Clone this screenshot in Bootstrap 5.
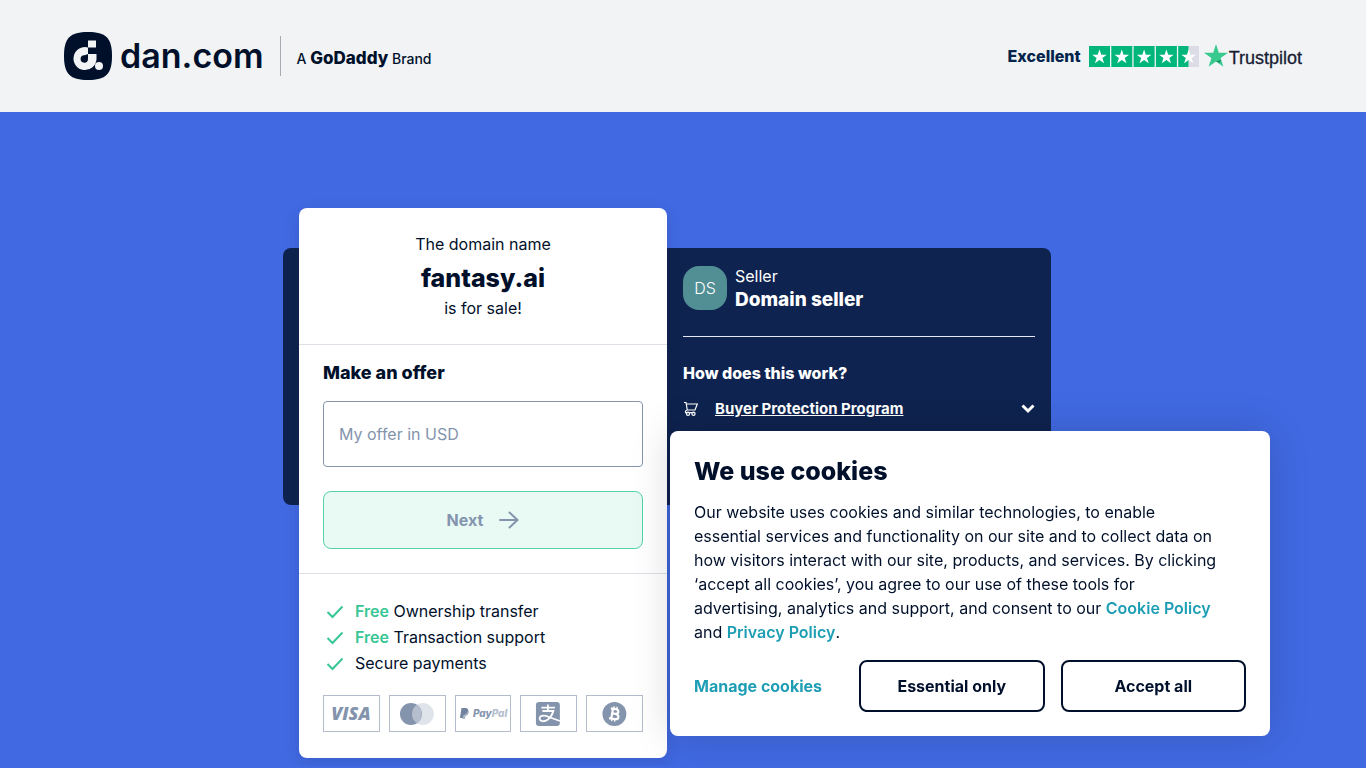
<!DOCTYPE html>
<html lang="en">
<head>
<meta charset="utf-8">
<meta name="viewport" content="width=device-width, initial-scale=1">
<title>fantasy.ai is for sale</title>
<link href="https://cdn.jsdelivr.net/npm/bootstrap@5.3.0/dist/css/bootstrap.min.css" rel="stylesheet">
<style>
  :root { --navy: #00102b; --panel: #0e234f; --mint: #38c695; --teal: #1e9eb4; --slate: #8494ad; }
  body { font-family: Inter, "Noto Sans", sans-serif; font-size: 16px; line-height: 24px; color: var(--navy); background: #4169e1; }
  .site-header { background: #f1f3f5; min-height: 112px; padding: 24px 64px; }
  .brand-name { font-size: 34px; line-height: 40px; font-weight: 600; }
  .brand-rule { width: 1px; height: 40px; background: #a6abb2; }
  .brand-by { font-size: 14px; font-weight: 500; padding-top: 4px; }
  .brand-by strong { font-size: 17px; font-weight: 800; }
  .rating-word { font-size: 16px; font-weight: 800; color: #05244c; }
  .trust-word { font-family: "Liberation Sans", sans-serif; font-size: 18px; color: #191b33; padding-top: 4px; -webkit-text-stroke: 0.3px #191b33; }
  .hero { padding: 96px 0 8px; }
  .hero-grid { display: grid; max-width: 800px; margin: 0 auto; grid-template-columns: 16px 368px 1fr 32px; grid-template-rows: 40px auto 1fr; }
  .seller-panel { grid-column: 1 / 4; grid-row: 2; background: var(--panel); border-radius: 8px; padding: 16px 16px 84px 400px; }
  .offer-card { grid-column: 2; grid-row: 1 / 4; background: #fff; border-radius: 8px; box-shadow: 0 4px 16px rgba(0,16,43,.12); }
  .domain-head { padding: 24px; }
  .domain-title { font-size: 25px; line-height: 40px; font-weight: 800; padding-top: 2px; margin-bottom: -2px; }
  .offer-form { padding: 16px 24px 24px; border-top: 1px solid #dce0e6; border-bottom: 1px solid #dce0e6; }
  .section-title { font-size: 18px; line-height: 24px; font-weight: 800; }
  .offer-input { height: 66px; border: 1px solid var(--slate); border-radius: 4px; padding: 0 15px; font-size: 16px; }
  .offer-input::placeholder { color: var(--slate); }
  .next-btn.btn { height: 58px; background: #e9faf5; border: 1px solid #51d3ad; border-radius: 8px; color: var(--slate); font-weight: 700; opacity: 1; }
  .perks { padding: 24px 24px 26px; }
  .perk-list { margin-bottom: 19px; }
  .perk-list li { line-height: 26px; }
  .perk-list b { color: var(--mint); font-weight: 600; }
  .pay-row { display: grid; grid-template-columns: repeat(5, 1fr); gap: 9px; }
  .pay-row svg { display: block; width: 100%; height: 37px; border: 1px solid #b4bccb; }
  .avatar { width: 44px; height: 44px; border-radius: 16px; background: #528f94; color: #fff; font-weight: 300; }
  .seller-rule { border-top: 1px solid #e3e7ef; opacity: 1; margin: 24px 0; }
  .seller-name { font-size: 19px; font-weight: 800; }
  .how-title { font-size: 16px; line-height: 24px; font-weight: 800; margin-bottom: 12px; }
  .faq-btn { background: none; border: 0; padding: 0; color: #fff; font-size: 15px; font-weight: 700; }
  .cookie-box { position: fixed; right: 96px; bottom: 32px; width: 600px; max-width: calc(100% - 32px); background: #fff; border-radius: 8px; padding: 24px; box-shadow: 0 0 40px rgba(0,0,0,.15); z-index: 1030; }
  .cookie-box h2 { font-size: 25px; line-height: 32px; font-weight: 800; margin-bottom: 13px; }
  .cookie-box a { color: var(--teal); font-weight: 600; text-decoration: none; }
  .cookie-actions { display: grid; grid-template-columns: 149px 1fr 1fr; gap: 16px; }
  .cookie-actions a { font-weight: 700; }
  .cookie-actions .btn { height: 52px; border: 2px solid var(--navy); border-radius: 8px; color: var(--navy); font-weight: 700; }
  @media (max-width: 800px) {
    .hero-grid { grid-template-columns: 1fr; grid-template-rows: auto; padding: 0 16px; }
    .seller-panel, .offer-card { grid-column: 1; grid-row: auto; }
    .seller-panel { padding: 16px; }
    .cookie-box { right: 16px; }
    .cookie-box br { display: none; }
  }
</style>
</head>
<body>
<header class="site-header d-flex flex-wrap align-items-center justify-content-between">
  <div class="d-flex align-items-center">
    <svg width="48" height="48" viewBox="0 0 48 48" aria-hidden="true">
      <path d="M24 0C42 0 48 6 48 24S42 48 24 48 0 42 0 24 6 0 24 0Z" fill="#00102b"/>
      <path d="M24 15.500A11.500 11.500 0 1 0 32.500 27V22H24V15.500ZM24 22V27A3.700 3.700 0 1 1 20.500 23.300Q22 22.800 24 22Z" fill="#f1f3f5" fill-rule="evenodd"/>
      <path d="M24 8.500H32V15.500H24Z" fill="#f1f3f5"/>
      <circle cx="35" cy="34" r="4" fill="#f1f3f5"/>
    </svg>
    <span class="brand-name ms-2">dan.com</span>
    <span class="brand-rule mx-3"></span>
    <span class="brand-by">A <strong>GoDaddy</strong> Brand</span>
  </div>
  <div class="d-flex align-items-center">
    <span class="rating-word me-2">Excellent</span>
    <svg width="110" height="21" viewBox="0 0 110 21" aria-hidden="true">
      <defs><path id="star" d="M0-7.500 1.800-2.300H7.300L2.900 1 4.600 6.200 0 3-4.600 6.200-2.900 1-7.300-2.300H-1.800Z"/></defs>
      <path d="M0 0H21V21H0ZM22.300 0H43.300V21H22.300ZM44.600 0H65.600V21H44.600ZM66.900 0H87.900V21H66.900ZM89.200 0H99.700V21H89.200Z" fill="#00b67a"/>
      <path d="M99.700 0H110V21H99.700Z" fill="#dcdce6"/>
      <g fill="#fff"><use href="#star" x="10.500" y="11"/><use href="#star" x="32.800" y="11"/><use href="#star" x="55.100" y="11"/><use href="#star" x="77.400" y="11"/><use href="#star" x="99.700" y="11"/></g>
    </svg>
    <svg class="ms-1" width="26" height="24" viewBox="0 0 26 24" aria-hidden="true"><path d="M13 0 15.800 8.700H25L17.600 14.100 20.400 22.800 13 17.400 5.600 22.800 8.400 14.100 1 8.700H10.200Z" fill="#38c98f"/><path d="M18.200 16 13 17.400 16.500 18.700Z" fill="#118254"/></svg>
    <span class="trust-word">Trustpilot</span>
  </div>
</header>

<main class="hero">
  <div class="hero-grid">
    <section class="seller-panel text-white">
      <div class="d-flex align-items-center gap-2">
        <div class="avatar d-flex align-items-center justify-content-center">DS</div>
        <div><div>Seller</div><div class="seller-name">Domain seller</div></div>
      </div>
      <hr class="seller-rule">
      <h2 class="how-title">How does this work?</h2>
      <button type="button" class="faq-btn d-flex align-items-center w-100">
        <svg class="me-3" width="16" height="16" viewBox="0 0 16 16" fill="none" stroke="#fff" stroke-width="1.200" aria-hidden="true"><path d="M1 1.500H3L4.300 9H12L14.300 3H3.300M4.300 9Q2 9.500 2.500 11.700H12"/><circle cx="5" cy="12.700" r="1.600"/><circle cx="10.500" cy="12.700" r="1.600"/></svg>
        <span class="text-decoration-underline">Buyer Protection Program</span>
        <svg class="ms-auto" width="14" height="10" viewBox="0 0 14 10" fill="none" stroke="#fff" stroke-width="3" aria-hidden="true"><path d="M1.500 1.500 7 7 12.500 1.500"/></svg>
      </button>
    </section>

    <section class="offer-card">
      <div class="domain-head text-center">
        <div>The domain name</div>
        <h1 class="domain-title">fantasy.ai</h1>
        <div>is for sale!</div>
      </div>
      <form class="offer-form">
        <label class="section-title d-block mb-3" for="offer">Make an offer</label>
        <input id="offer" type="text" class="form-control offer-input mb-4" placeholder="My offer in USD">
        <button type="submit" class="btn next-btn w-100 d-flex align-items-center justify-content-center gap-3" disabled>Next
          <svg width="20" height="18" viewBox="0 0 20 18" fill="none" stroke="currentColor" stroke-width="2" stroke-linecap="round" aria-hidden="true"><path d="M1 9H18M10.500 1.500 18.500 9 10.500 16.500"/></svg>
        </button>
      </form>
      <div class="perks">
        <svg width="0" height="0" class="position-absolute" aria-hidden="true"><symbol id="check" viewBox="0 0 24 24"><path d="M4.500 13 9.500 18 19.500 7.500" fill="none" stroke="#38c695" stroke-width="2"/></symbol></svg>
        <ul class="perk-list list-unstyled">
          <li class="d-flex align-items-center gap-2"><svg width="24" height="24"><use href="#check"/></svg><span><b>Free</b> Ownership transfer</span></li>
          <li class="d-flex align-items-center gap-2"><svg width="24" height="24"><use href="#check"/></svg><span><b>Free</b> Transaction support</span></li>
          <li class="d-flex align-items-center gap-2"><svg width="24" height="24"><use href="#check"/></svg><span>Secure payments</span></li>
        </ul>
        <div class="pay-row">
          <svg viewBox="0 0 55 35" role="img" aria-label="Visa"><text x="27" y="24" text-anchor="middle" font-family="Open Sans, sans-serif" font-size="18" font-weight="800" font-style="italic" fill="#8494ad">VISA</text></svg>
          <svg viewBox="0 0 55 35" role="img" aria-label="Mastercard"><circle cx="33" cy="18" r="11" fill="#dfe4ea"/><circle cx="21" cy="18" r="11" fill="#8494ad"/><path d="M27 8.800A11 11 0 0 1 27 27.200 11 11 0 0 1 27 8.800Z" fill="#b4becc"/></svg>
          <svg viewBox="0 0 55 35" role="img" aria-label="PayPal"><path d="M5.500 12H10Q13 12.500 12 16 11 19 8 19L7.500 22H4Z" fill="#71839e"/><path d="M12 14Q14 16 12 18.500 11 20 9.500 20L9 23H6.500L7 19.500Q11.500 19 12 14Z" fill="#a9b4c5"/><text x="17" y="21" font-family="Inter, sans-serif" font-size="10" font-weight="800" font-style="italic" fill="#8494ad">Pay<tspan fill="#b4becc">Pal</tspan></text></svg>
          <svg viewBox="0 0 55 35" role="img" aria-label="Alipay"><rect x="15" y="6" width="24" height="24" rx="3" fill="#8494ad"/><path d="M20.500 11.500H34M27 8.500V15M21.500 15H32.500Q31 20.500 27 23.500 23.500 26 20.500 25 17.500 23 19.500 20.500 22.500 18.500 28 21L39 25" fill="none" stroke="#fff" stroke-width="1.800"/></svg>
          <svg viewBox="0 0 55 35" role="img" aria-label="Bitcoin"><circle cx="27.500" cy="18" r="12" fill="#8494ad"/><g transform="rotate(10 27.500 18)" fill="none" stroke="#fff" stroke-width="2.200"><path d="M23 13H28Q31 13.200 31 15.300 31 17.600 28 17.700H25H28.500Q32 18 32 20.500 32 23 28.500 23H23M25.200 13V23"/><path d="M26 10.500V13M29 10.500V13M26 23V25.500M29 23V25.500" stroke-width="1.400"/></g></svg>
        </div>
      </div>
    </section>
  </div>
</main>

<aside class="cookie-box" aria-label="Cookie notice">
  <h2>We use cookies</h2>
  <p class="mb-3">Our website uses cookies and similar technologies, to enable<br> essential services and functionality on our site and to collect data on<br> how visitors interact with our site, products, and services. By clicking<br> ‘accept all cookies’, you agree to our use of these tools for<br> advertising, analytics and support, and consent to our <a href="#">Cookie Policy</a><br> and <a href="#">Privacy Policy</a>.</p>
  <div class="cookie-actions align-items-center">
    <a href="#">Manage cookies</a>
    <button type="button" class="btn">Essential only</button>
    <button type="button" class="btn">Accept all</button>
  </div>
</aside>
<script src="https://cdn.jsdelivr.net/npm/bootstrap@5.3.0/dist/js/bootstrap.bundle.min.js"></script>
</body>
</html>
